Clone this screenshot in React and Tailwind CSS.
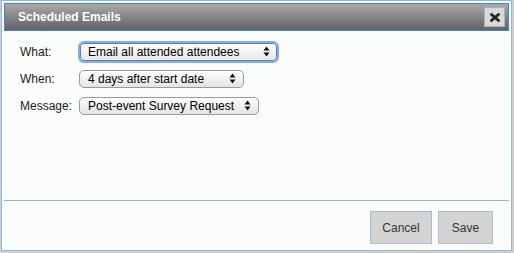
function Arrows() {
  return (
    <svg width="7" height="11" viewBox="0 0 7 11" className="shrink-0">
      <polygon points="0.5,4.5 3.5,0.5 6.5,4.5" fill="#111" />
      <polygon points="0.5,6.5 3.5,10.5 6.5,6.5" fill="#111" />
    </svg>
  );
}

function Row({ label, children }) {
  return (
    <div className="h-[27px] flex items-center">
      <div className="w-[59px] shrink-0 whitespace-nowrap text-[12px] text-[#222]">{label}</div>
      {children}
    </div>
  );
}

export default function App() {
  return (
    <div className="w-[514px] h-[253px] bg-[#cfcfcf] overflow-hidden font-['Liberation_Sans',Arial,sans-serif]">
      <div className="ml-[1px] w-[511px] h-[251px] border border-[#8cb8e2] bg-[#fbfcfc] p-[2px] flex flex-col">
        <div className="h-[28px] shrink-0 border border-[#3d87d6] bg-gradient-to-b from-[#a9a9a9] to-[#626262] flex items-center justify-between pl-[13px] pr-[3px]">
          <span className="text-[12px] font-bold text-white">Scheduled Emails</span>
          <div className="w-[21px] h-[20px] bg-[#d9d9d9] border border-[#a3b4c6] flex items-center justify-center">
            <svg width="10" height="9" viewBox="0 0 10 9">
              <line x1="1.5" y1="1.5" x2="8.5" y2="7.5" stroke="#222" strokeWidth="2.8" strokeLinecap="round" />
              <line x1="8.5" y1="1.5" x2="1.5" y2="7.5" stroke="#222" strokeWidth="2.8" strokeLinecap="round" />
            </svg>
          </div>
        </div>
        <div className="flex-1 pt-[7px] pl-[16px]">
          <Row label="What:">
            <div className="ml-[1px] w-[197px] h-[18px] shrink-0 rounded-[4px] border border-[#5a7fb0] shadow-[0_0_0_2px_#82ade9] bg-gradient-to-b from-white to-[#e8e8e8] flex items-center justify-between pl-[7px] pr-[6px] text-[12px] text-black whitespace-nowrap">
              <span>Email all attended attendees</span>
              <Arrows />
            </div>
          </Row>
          <Row label="When:">
            <div className="w-[165px] h-[18px] shrink-0 rounded-[5px] border border-[#9a9a9a] bg-gradient-to-b from-white to-[#e4e4e4] flex items-center justify-between pl-[8px] pr-[7px] text-[12px] text-black whitespace-nowrap">
              <span>4 days after start date</span>
              <Arrows />
            </div>
          </Row>
          <Row label="Message:">
            <div className="w-[180px] h-[18px] shrink-0 rounded-[5px] border border-[#9a9a9a] bg-gradient-to-b from-white to-[#e4e4e4] flex items-center justify-between pl-[8px] pr-[7px] text-[12px] text-black whitespace-nowrap">
              <span>Post-event Survey Request</span>
              <Arrows />
            </div>
          </Row>
        </div>
        <div className="h-[48px] shrink-0 border-t border-[#8cb8e2] pt-[10px] pr-[16px] flex justify-end items-start gap-[6px]">
          <div className="w-[62px] h-[33px] bg-[#d4d4d4] border border-[#a6bdd3] flex items-center justify-center text-[12px] text-[#333]">Cancel</div>
          <div className="w-[55px] h-[33px] bg-[#d4d4d4] border border-[#a6bdd3] flex items-center justify-center text-[12px] text-[#333]">Save</div>
        </div>
      </div>
    </div>
  );
}
